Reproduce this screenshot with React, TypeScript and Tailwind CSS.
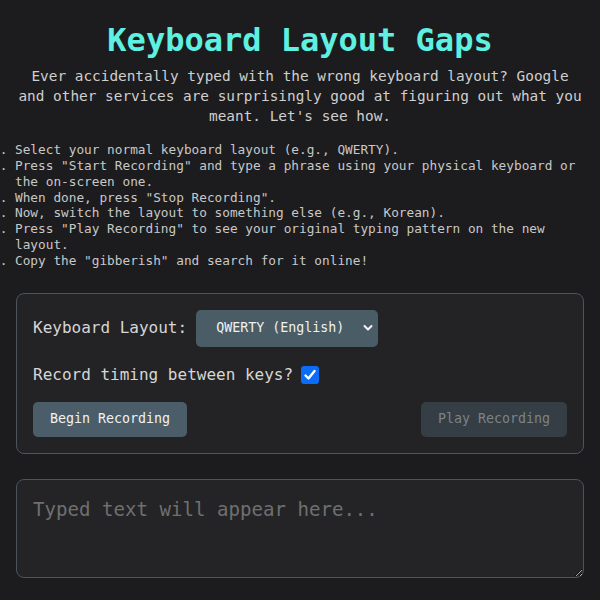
import React from "react";

export default function App() {
  const steps = [
    "Select your normal keyboard layout (e.g., QWERTY).",
    'Press "Start Recording" and type a phrase using your physical keyboard or the on-screen one.',
    'When done, press "Stop Recording".',
    "Now, switch the layout to something else (e.g., Korean).",
    'Press "Play Recording" to see your original typing pattern on the new layout.',
    'Copy the "gibberish" and search for it online!',
  ];
  return (
    <div
      className="min-h-[600px] w-full bg-[#1c1c1e] text-[#d4d4d4] px-4 pt-[21px] pb-6"
      style={{ fontFamily: '"DejaVu Sans Mono", "Liberation Mono", monospace' }}
    >
      <h1 className="text-center text-[32px] leading-[1.2] font-bold text-[#5ef0e0]">
        Keyboard Layout Gaps
      </h1>
      <p className="mt-[8px] text-center text-[14.4px] leading-[1.36] text-[#cfcfcf]">
        Ever accidentally typed with the wrong keyboard layout? Google and other services are surprisingly good at figuring out what you meant. Let's see how.
      </p>
      <ol className="mt-[16px] list-decimal pl-0 ml-[-1px] text-[12.75px] leading-[1.24] text-[#c8c8c8]">
        {steps.map((s) => (
          <li key={s}>{s}</li>
        ))}
      </ol>
      <div className="mt-[24px] rounded-lg border border-[#4b555d] bg-[#232325] p-4">
        <div className="flex items-center gap-[9px]">
          <span className="text-[16px] leading-6 text-[#d6d6d6]">Keyboard Layout:</span>
          <div className="relative flex h-[37px] w-[182px] items-center rounded-[5px] bg-[#4a5c66] pl-[20px] text-[13.3px] text-[#f0f0f0]">
            <span>QWERTY (English)</span>
            <svg
              className="absolute right-[5px] top-[14px]"
              width="10"
              height="8"
              viewBox="0 0 10 8"
              fill="none"
            >
              <path d="M1.5 2 L5 5.5 L8.5 2" stroke="#f5f5f5" strokeWidth="2" strokeLinecap="round" strokeLinejoin="round" />
            </svg>
          </div>
        </div>
        <div className="mt-[16px] flex items-center gap-[8px]">
          <span className="text-[16px] leading-6 text-[#d6d6d6]">Record timing between keys?</span>
          <span className="flex h-[18px] w-[18px] items-center justify-center rounded-[3px] bg-[#0b6cf5]">
            <svg width="14" height="14" viewBox="0 0 14 14" fill="none">
              <path d="M2.5 7.5 L5.5 10.5 L11.5 3" stroke="#ffffff" strokeWidth="2.4" strokeLinecap="round" strokeLinejoin="round" />
            </svg>
          </span>
        </div>
        <div className="mt-[15px] flex items-center justify-between">
          <button className="h-[35px] rounded-[5px] bg-[#4a5d68] px-[17px] text-[13.3px] text-[#f2f2f2]">
            Begin Recording
          </button>
          <button className="h-[35px] rounded-[5px] bg-[#343e44] px-[17px] text-[13.3px] text-[#7d8388]" disabled>
            Play Recording
          </button>
        </div>
      </div>
      <textarea
        className="mt-[25px] block h-[99px] w-full rounded-lg border border-[#4b555d] bg-[#242426] px-4 pt-[18px] pb-[16px] text-[19.1px] leading-[1.3] text-[#d6d6d6] placeholder:text-[#6f6f6f] outline-none"
        placeholder="Typed text will appear here..."
        style={{ fontFamily: '"DejaVu Sans Mono", "Liberation Mono", monospace' }}
      />
    </div>
  );
}
